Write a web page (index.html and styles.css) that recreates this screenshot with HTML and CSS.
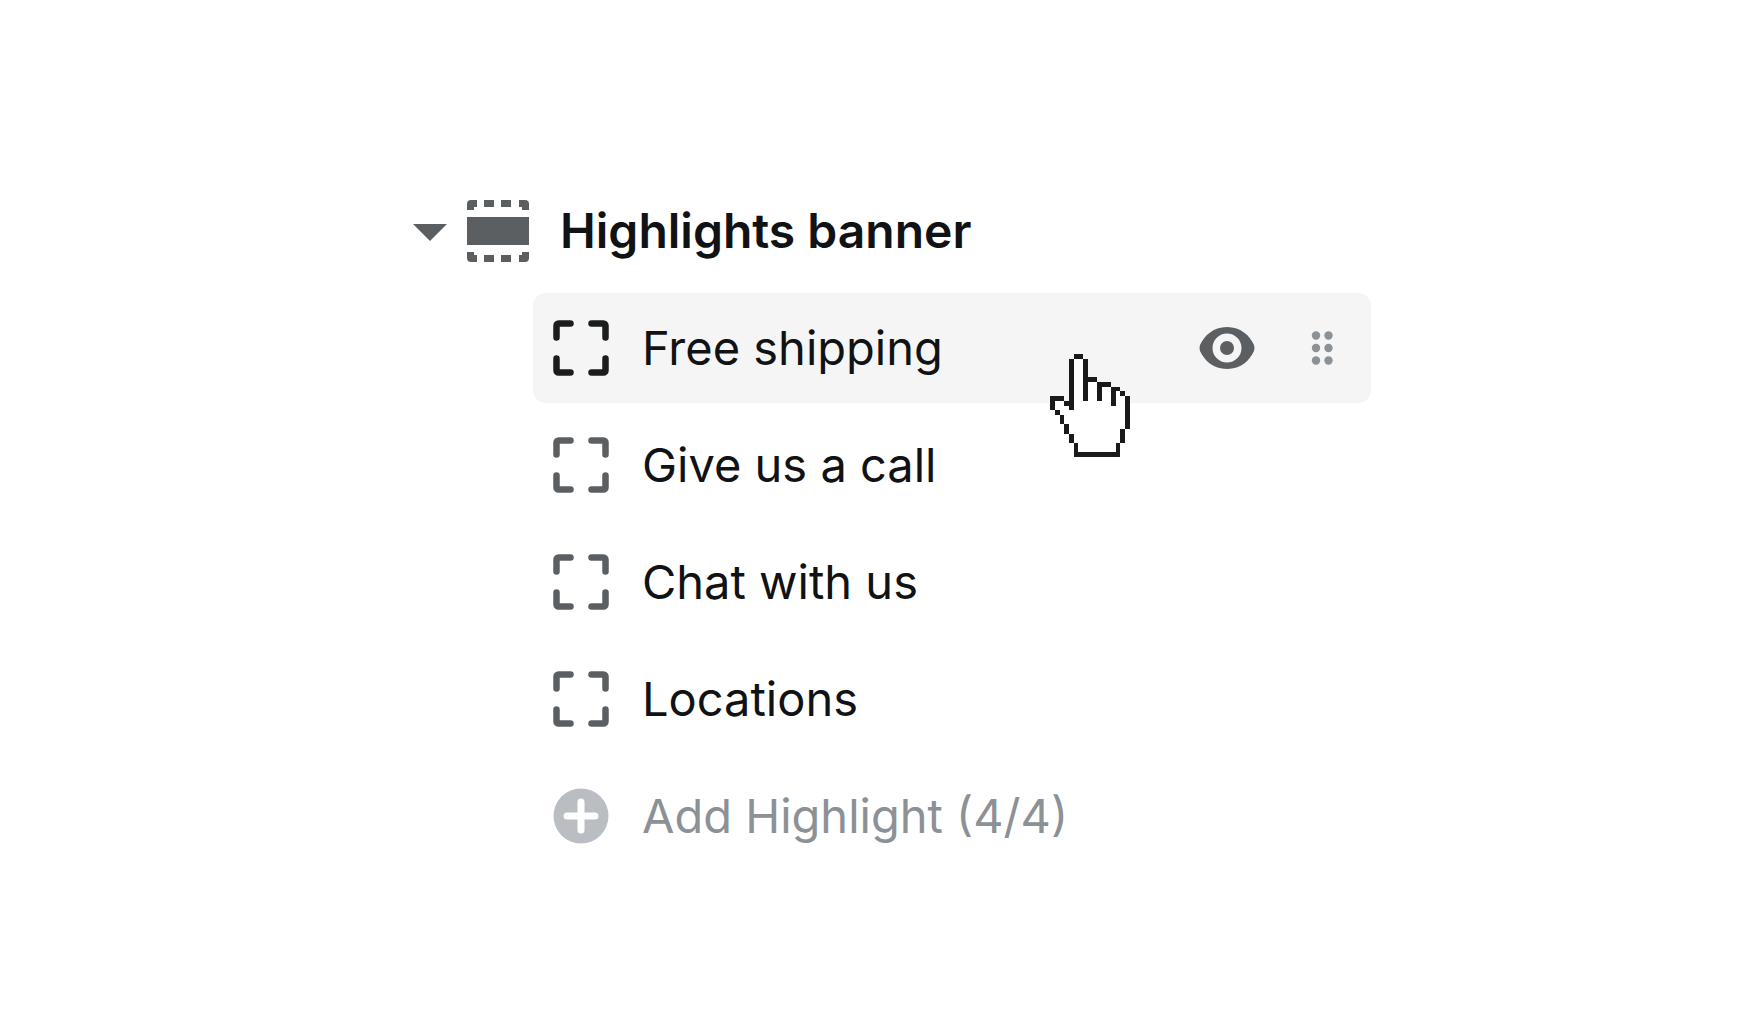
FILE: index.html
```html
<!DOCTYPE html>
<html lang="en">
<head>
<meta charset="utf-8">
<meta name="viewport" content="width=device-width, initial-scale=1">
<title>Highlights banner</title>
<link rel="stylesheet" href="styles.css">
</head>
<body>
<svg class="sprite" aria-hidden="true">
  <symbol id="block" viewBox="0 0 56 56">
    <path d="M3.500 17.500V5.500a2 2 0 0 1 2-2h12M38.500 3.500h12a2 2 0 0 1 2 2v12M52.500 38.500v12a2 2 0 0 1-2 2h-12M17.500 52.500h-12a2 2 0 0 1-2-2v-12" fill="none" stroke="currentColor" stroke-width="6.500" stroke-linecap="round"/>
  </symbol>
</svg>
<main class="page">
  <section class="tree">
    <header class="section">
      <button class="toggle" type="button" aria-label="Collapse section" aria-expanded="true">
        <svg width="34" height="20" viewBox="0 0 34 20"><path d="M0 3h34L17 20z" fill="currentColor"/></svg>
      </button>
      <svg class="section-icon" width="62" height="62" viewBox="0 0 62 62" fill="currentColor" aria-hidden="true">
        <path d="M0 17h62v28H0zM17 0h10v7H17zM34 0h10v7H34zM17 55h10v7H17zM34 55h10v7H34zM4 0h6v7H7v3H0V4a4 4 0 0 1 4-4zM58 0h-6v7h3v3h7V4a4 4 0 0 0-4-4zM4 62h6v-7H7v-3H0v6a4 4 0 0 0 4 4zM58 62h-6v-7h3v-3h7v6a4 4 0 0 1-4 4z"/>
      </svg>
      <h1 class="title">Highlights banner</h1>
    </header>
    <ul class="blocks">
      <li class="row row-active">
        <button class="block" type="button"><svg class="icon" aria-hidden="true"><use href="#block"/></svg>Free shipping</button>
        <button class="action" type="button" aria-label="Hide block">
          <svg width="56" height="42" viewBox="0 0 56 42"><path d="M28 0C14 0 5 9 1 18q-1 3 0 6c4 9 13 18 27 18s23-9 27-18q1-3 0-6C51 9 42 0 28 0zm0 35.500a14.500 14.500 0 1 1 0-29 14.500 14.500 0 0 1 0 29z" fill="currentColor"/><circle cx="28" cy="21" r="7" fill="currentColor"/></svg>
        </button>
        <button class="action drag" type="button" aria-label="Drag to reorder">
          <svg width="22" height="34" viewBox="0 0 22 34" fill="currentColor"><circle cx="5" cy="4.500" r="4.200"/><circle cx="17.500" cy="4.500" r="4.200"/><circle cx="5" cy="17" r="4.200"/><circle cx="17.500" cy="17" r="4.200"/><circle cx="5" cy="29.500" r="4.200"/><circle cx="17.500" cy="29.500" r="4.200"/></svg>
        </button>
        <svg class="pointer" viewBox="0 0 17 22" shape-rendering="crispEdges" aria-hidden="true">
          <path fill="#fff" d="M5 1h2v5h3v1h3v1h2v1h1v7h-1v3h-1v2H6v-2H5v-2H4v-2H3v-2H2v-1H1v-2h2v1h2z"/>
          <path fill="#1a1a1b" d="M5 0h2v1H5zM4 1h1v11H4zM7 1h1v4h2v1H8v4H7zM10 6h3v1h-2v3h-1zM13 7h2v1h-1v3h-1zM15 8h1v1h-1zM16 9h1v7h-1zM15 16h1v3h-1zM14 19h1v3H5v-3h1v2h8zM4 17h1v2H4zM3 15h1v2H3zM2 13h1v2H2zM1 12h1v1H1zM0 9h3v1H1v2H0zM3 10h1v1H3z"/>
        </svg>
      </li>
      <li class="row">
        <button class="block" type="button"><svg class="icon" aria-hidden="true"><use href="#block"/></svg>Give us a call</button>
      </li>
      <li class="row">
        <button class="block" type="button"><svg class="icon" aria-hidden="true"><use href="#block"/></svg>Chat with us</button>
      </li>
      <li class="row">
        <button class="block" type="button"><svg class="icon" aria-hidden="true"><use href="#block"/></svg>Locations</button>
      </li>
      <li class="row">
        <button class="block add" type="button" disabled><svg class="icon" viewBox="0 0 56 56" aria-hidden="true"><circle cx="28" cy="28" r="27.500" fill="#babec3"/><path d="M28 14v28M14 28h28" stroke="#fff" stroke-width="7" stroke-linecap="round"/></svg>Add Highlight (4/4)</button>
      </li>
    </ul>
  </section>
</main>
</body>
</html>
```
FILE: styles.css
```css
* {
  box-sizing: border-box;
}

body {
  margin: 0;
  background: #fff;
  color: #111213;
  font: 400 47px/56px Inter, "Liberation Sans", sans-serif;
}

button {
  margin: 0;
  padding: 0;
  border: 0;
  background: none;
  color: inherit;
  font: inherit;
  text-align: left;
}

svg {
  display: block;
  flex: none;
}

.sprite {
  position: absolute;
  width: 0;
  height: 0;
}

.page {
  padding: 176px 0 80px 22px;
}

.tree {
  width: 100%;
  max-width: 958px;
  margin: 0 auto;
}

.section {
  display: flex;
  align-items: center;
  height: 110px;
  color: #5c5f62;
}

.section-icon {
  margin: 0 31px 0 20px;
}

.title {
  margin: 0;
  color: #111213;
  font-size: 48px;
  font-weight: 600;
}

.blocks {
  display: grid;
  gap: 7px;
  margin: 7px 0 0;
  padding: 0 0 0 120px;
  list-style: none;
}

.row {
  position: relative;
  display: flex;
  align-items: center;
  height: 110px;
  padding-right: 38px;
  border-radius: 12px;
}

.row-active {
  background: #f5f5f5;
}

.block {
  display: flex;
  flex: 1;
  align-items: center;
  gap: 33px;
  height: 100%;
  padding-left: 20px;
}

.icon {
  width: 56px;
  height: 56px;
  color: #5c5f62;
}

.row-active .icon {
  color: #1a1c1d;
}

.add {
  color: #8c9196;
}

.action {
  color: #5c5f62;
}

.drag {
  margin-left: 56px;
  color: #8c9196;
}

.pointer {
  position: absolute;
  top: 61px;
  left: 517px;
  z-index: 1;
  width: 80px;
  height: 103px;
}
```
